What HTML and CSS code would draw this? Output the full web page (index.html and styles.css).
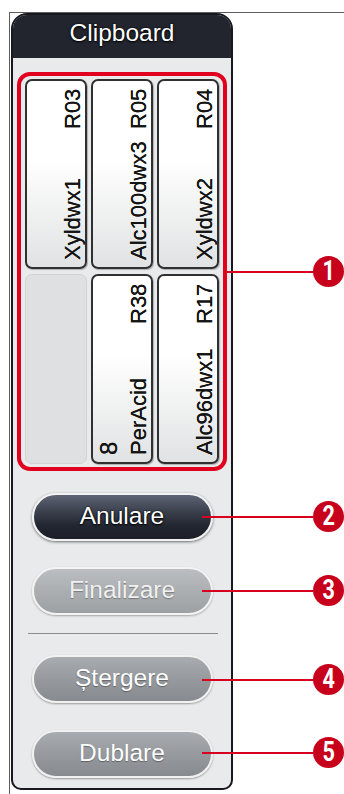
FILE: index.html
```html
<!DOCTYPE html>
<html lang="ro">
<head>
<meta charset="utf-8">
<title>Clipboard</title>
<link rel="stylesheet" href="styles.css">
</head>
<body>
<div class="page">
  <div class="frame">
    <section class="panel">
      <header class="panel-head">Clipboard</header>
      <div class="panel-body">
        <div class="slots">
          <div class="card"><div class="card-in"><div class="name">Xyldwx1</div><div class="code">R03</div></div></div>
          <div class="card"><div class="card-in"><div class="name">Alc100dwx3</div><div class="code">R05</div></div></div>
          <div class="card"><div class="card-in"><div class="name">Xyldwx2</div><div class="code">R04</div></div></div>
          <div class="slot-empty"></div>
          <div class="card"><div class="card-in"><div class="name"><div class="num">8</div><div class="line">PerAcid</div></div><div class="code">R38</div></div></div>
          <div class="card"><div class="card-in"><div class="name">Alc96dwx1</div><div class="code">R17</div></div></div>
        </div>
        <button class="btn btn-dark btn-first">Anulare</button>
        <button class="btn btn-disabled btn-second">Finalizare</button>
        <hr class="sep">
        <button class="btn btn-grey btn-third">Ștergere</button>
        <button class="btn btn-grey btn-fourth">Dublare</button>
      </div>
    </section>
  </div>
  <div class="callouts">
    <div class="callout c1"><span class="lead"></span><span class="badge"><span>1</span></span></div>
    <div class="callout c2"><span class="lead"></span><span class="badge"><span>2</span></span></div>
    <div class="callout c3"><span class="lead"></span><span class="badge"><span>3</span></span></div>
    <div class="callout c4"><span class="lead"></span><span class="badge"><span>4</span></span></div>
    <div class="callout c5"><span class="lead"></span><span class="badge"><span>5</span></span></div>
  </div>
</div>
</body>
</html>
```
FILE: styles.css
```css
html, body {
  margin: 0;
  padding: 0;
  background: #fff;
}
body {
  font-family: "Liberation Sans", Arial, sans-serif;
  width: 344px;
  height: 794px;
  overflow: hidden;
}
.page {
  position: relative;
  width: 344px;
  height: 794px;
  box-sizing: border-box;
  padding: 12px 0 0 9px;
}
.frame {
  height: 782px;
  border-top: 1px solid #5c5c5c;
  border-left: 1px solid #5c5c5c;
  box-sizing: border-box;
}
.panel {
  margin-left: 1px;
  width: 222px;
  height: 777px;
  box-sizing: border-box;
  border: 2px solid #17191e;
  border-radius: 16px 16px 10px 10px;
  background: #e9eaec;
  overflow: hidden;
  display: flex;
  flex-direction: column;
}
.panel-head {
  height: 43px;
  flex: none;
  background: #22252e;
  color: #fff;
  font-size: 24.5px;
  line-height: 36px;
  text-align: center;
  text-shadow: 0 0 2px #000, 0 1px 2px #000;
}
.panel-body {
  flex: 1;
  padding: 14px 4px 0;
  display: flex;
  flex-direction: column;
}
.slots {
  border: 4px solid #e1001e;
  border-radius: 13px;
  padding: 3px 4px;
  display: grid;
  grid-template-columns: repeat(3, 1fr);
  grid-auto-rows: 190px;
  column-gap: 4px;
  row-gap: 5px;
}
.card {
  box-sizing: border-box;
  border: 2px solid #303030;
  border-radius: 7px;
  background: linear-gradient(to bottom, #ffffff 0%, #ffffff 42%, #e1e2e3 100%);
  box-shadow: 1px 1px 1px rgba(0, 0, 0, 0.25);
  overflow: hidden;
}
.card-in {
  width: 100%;
  height: 100%;
  box-sizing: border-box;
  writing-mode: vertical-rl;
  transform: rotate(180deg);
  display: flex;
  justify-content: space-between;
  align-items: flex-end;
  padding-inline-start: 7px;
  padding-inline-end: 8px;
  padding-block-end: 1px;
  font-size: 22px;
  line-height: 23px;
  color: #141414;
  white-space: nowrap;
  text-shadow: 0 0 0.4px #141414;
}
.name {
  text-align: start;
}
.num {
  margin-block-end: 7px;
  font-size: 24px;
}
.slot-empty {
  box-sizing: border-box;
  border: 1px solid #d2d3d5;
  border-radius: 7px;
  background: #dfe0e2;
}
.btn {
  display: block;
  width: 181px;
  height: 48px;
  margin: 0 auto;
  padding: 0 0 2px;
  box-sizing: border-box;
  border-radius: 24px;
  font-family: "Liberation Sans", Arial, sans-serif;
  font-size: 24.5px;
  line-height: 1;
  cursor: pointer;
}
.btn-first { margin-top: 22px; }
.btn-second { margin-top: 26px; }
.btn-third { margin-top: 21px; }
.btn-fourth { margin-top: 27px; }
.btn-dark {
  color: #fff;
  border: 2px solid #f2f2f2;
  background: linear-gradient(to bottom, #5e6474 0%, #3b404d 38%, #222630 70%, #1b1e27 100%);
  box-shadow: 0 1px 3px rgba(0, 0, 0, 0.55);
  text-shadow: 0 1px 2px #000, 0 0 2px #000;
}
.btn-disabled {
  color: #f0f0f0;
  border: 2px solid #f3f3f3;
  background: linear-gradient(to bottom, #bbbdc0 0%, #adb0b3 45%, #9ea1a4 100%);
  box-shadow: 0 1px 2px rgba(0, 0, 0, 0.3);
  text-shadow: 0 1px 1px rgba(0, 0, 0, 0.3);
}
.btn-grey {
  color: #fff;
  border: 2px solid #f1f1f1;
  background: linear-gradient(to bottom, #a8abaf 0%, #989b9f 45%, #878a8e 100%);
  box-shadow: 0 1px 2px rgba(0, 0, 0, 0.35);
  text-shadow: 0 1px 1px rgba(0, 0, 0, 0.35);
}
.sep {
  margin: 18px 9px 0 11px;
  border: 0;
  height: 1px;
  background: #8c8c8c;
}
.callouts {
  position: absolute;
  left: 0;
  top: 0;
  width: 344px;
  height: 794px;
  pointer-events: none;
}
.callout {
  position: absolute;
  right: 0;
  height: 31px;
  display: flex;
  align-items: center;
}
.lead {
  flex: 1;
  height: 2px;
  background: #d8001f;
}
.badge {
  width: 31px;
  height: 31px;
  border-radius: 50%;
  background: #c7001c;
  color: #fff;
  display: flex;
  align-items: center;
  justify-content: center;
  font-family: Roboto, "Liberation Sans", sans-serif;
  font-weight: 700;
  font-size: 27px;
  line-height: 1;
}
.badge span {
  display: block;
  transform: scaleX(0.8);
}
.c1 { top: 256px; left: 227px; }
.c2 { top: 501px; left: 202px; }
.c3 { top: 575px; left: 202px; }
.c4 { top: 664px; left: 202px; }
.c5 { top: 737px; left: 202px; }
```
